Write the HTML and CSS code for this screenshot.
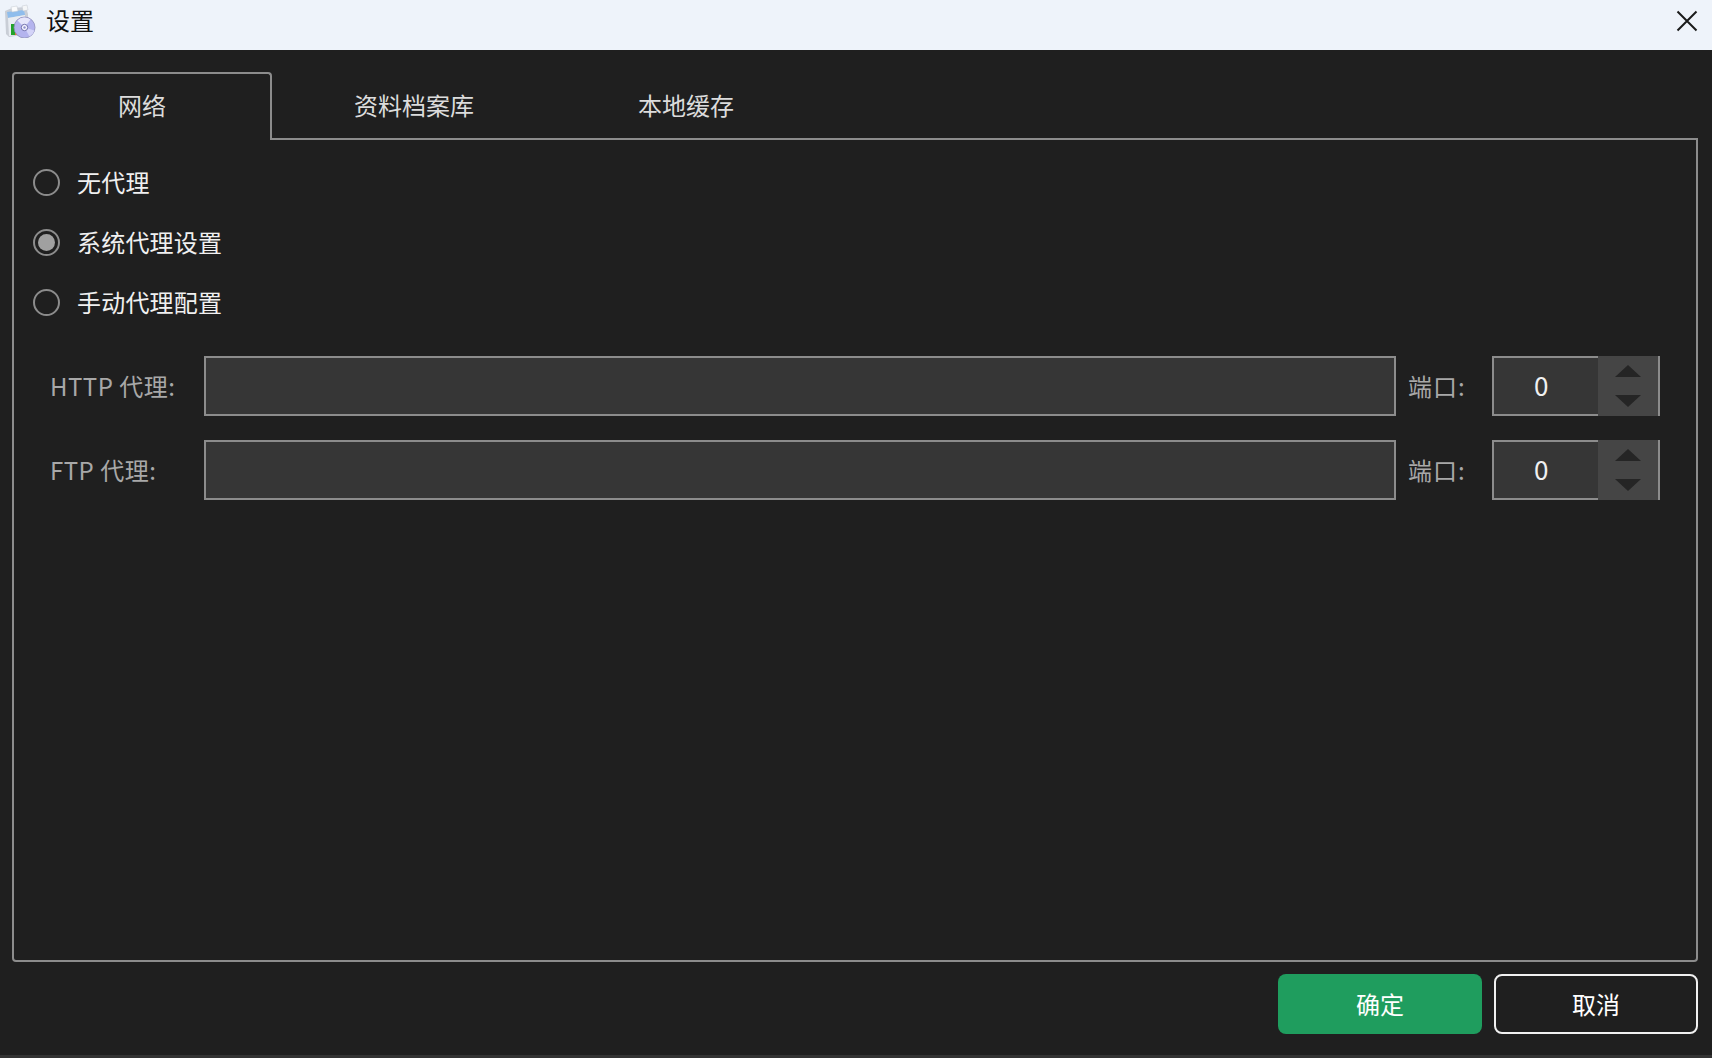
FILE: index.html
```html
<!DOCTYPE html>
<html lang="zh-CN">
<head>
<meta charset="utf-8">
<title>设置</title>
<link rel="stylesheet" href="styles.css">
</head>
<body>
<div class="window">
  <header class="titlebar">
    <svg class="app-icon" width="34" height="34" viewBox="0 0 34 34">
      <path d="M3 7 L10 4 L24 3 L26 10 L26 30 L7 33 L4 30 Z" fill="#c9ced6"/>
      <path d="M5 8 L22 6 L23 11 L6 14 Z" fill="#8fbdec"/>
      <path d="M6 14 L23 11 L23 30 L7 32 Z" fill="#e8ecf2"/>
      <path d="M9 3 L15 2 L16 7 L10 8 Z" fill="#fafbfc" stroke="#c2c8d0" stroke-width="0.500"/>
      <path d="M20 2 L25 1 L26 6 L21 7 Z" fill="#f4f6f8" stroke="#c2c8d0" stroke-width="0.500"/>
      <rect x="9" y="20" width="4" height="11" fill="#22a32a"/>
      <rect x="13" y="21" width="3" height="10" fill="#e8702a"/>
      <circle cx="22.500" cy="23.500" r="10.500" fill="#b4b4ee" stroke="#8c8cb8" stroke-width="0.800"/>
      <path d="M15.500 16.500 A10 10 0 0 1 28.500 15.500 L22.500 23.500 Z" fill="#e6e6fb"/>
      <path d="M22.500 23.500 L32.500 26.500 A10 10 0 0 1 27.500 32.500 Z" fill="#d4d4f8"/>
      <circle cx="22.500" cy="23.500" r="3.200" fill="#f6f6ff" stroke="#7070ac"/>
      <circle cx="22.500" cy="23.500" r="1.200" fill="#9090cc"/>
    </svg>
    <span class="title-text">设置</span>
    <svg class="close-icon" width="22" height="22" viewBox="0 0 22 22">
      <path d="M1.500 1.500 L20.500 20.500 M20.500 1.500 L1.500 20.500" stroke="#1a1a1a" stroke-width="2" fill="none"/>
    </svg>
  </header>
  <main class="content">
    <nav class="tabs">
      <div class="tab tab-active">网络</div>
      <div class="tab">资料档案库</div>
      <div class="tab">本地缓存</div>
    </nav>
    <section class="pane">
      <div class="radio-row">
        <span class="radio"></span><span class="radio-label">无代理</span>
      </div>
      <div class="radio-row">
        <span class="radio radio-on"></span><span class="radio-label">系统代理设置</span>
      </div>
      <div class="radio-row">
        <span class="radio"></span><span class="radio-label">手动代理配置</span>
      </div>
      <div class="proxy-form">
        <div class="proxy-row">
          <label class="field-label">HTTP 代理:</label>
          <div class="text-input"></div>
          <label class="port-label">端口:</label>
          <div class="spin">
            <div class="spin-value">0</div>
            <div class="spin-buttons">
              <svg width="28" height="14" viewBox="0 0 28 14"><path d="M14 1 L27 13 L1 13 Z" fill="#252525"/></svg>
              <svg width="28" height="14" viewBox="0 0 28 14"><path d="M1 1 L27 1 L14 13 Z" fill="#252525"/></svg>
            </div>
          </div>
        </div>
        <div class="proxy-row">
          <label class="field-label">FTP 代理:</label>
          <div class="text-input"></div>
          <label class="port-label">端口:</label>
          <div class="spin">
            <div class="spin-value">0</div>
            <div class="spin-buttons">
              <svg width="28" height="14" viewBox="0 0 28 14"><path d="M14 1 L27 13 L1 13 Z" fill="#252525"/></svg>
              <svg width="28" height="14" viewBox="0 0 28 14"><path d="M1 1 L27 1 L14 13 Z" fill="#252525"/></svg>
            </div>
          </div>
        </div>
      </div>
    </section>
    <footer class="actions">
      <button class="btn btn-ok">确定</button>
      <button class="btn btn-cancel">取消</button>
    </footer>
  </main>
</div>
</body>
</html>
```
FILE: styles.css
```css
* { box-sizing: border-box; }
html, body { margin: 0; padding: 0; height: 100%; overflow: hidden; }
body {
  background: #1f1f1f;
  font-family: "Noto Sans CJK SC", "Noto Sans", sans-serif;
  font-size: 24px;
  color: #e6e6e6;
}
.window {
  height: 1058px;
  display: flex;
  flex-direction: column;
  background: #1f1f1f;
  border-bottom: 3px solid #333333;
}
.titlebar {
  height: 50px;
  flex: none;
  background: #eef3fa;
  color: #111;
  display: flex;
  align-items: center;
  padding: 0 14px 9px 2px;
}
.app-icon { flex: none; margin-right: 10px; }
.title-text { flex: 1; line-height: 36px; padding-bottom: 2px; }
.close-icon { flex: none; }
.content { flex: 1; display: flex; flex-direction: column; padding: 22px 14px 0 12px; }
.tabs { display: flex; height: 67px; flex: none; position: relative; z-index: 1; }
.tab {
  width: 272px;
  height: 67px;
  display: flex;
  align-items: center;
  justify-content: center;
  color: #dcdcdc;
  padding-bottom: 3px;
}
.tab-active {
  width: 260px;
  margin-right: 6px;
  background: #1f1f1f;
  border: 2px solid #8c8c8c;
  border-bottom: 0;
  border-radius: 4px 4px 0 0;
  height: 68px;
  padding-bottom: 5px;
}
.pane {
  height: 824px;
  flex: none;
  border: 2px solid #8c8c8c;
  border-radius: 0 0 4px 4px;
  margin-top: -1px;
  padding: 12px 0 0 19px;
}
.radio-row { height: 60px; display: flex; align-items: center; color: #f0f0f0; }
.radio {
  width: 27px;
  height: 27px;
  border: 2px solid #8c8c8c;
  border-radius: 50%;
  flex: none;
  margin-right: 17px;
  display: flex;
  align-items: center;
  justify-content: center;
}
.radio-label { padding-bottom: 2px; letter-spacing: 0.2px; }
.radio-on::before { content: ""; width: 17px; height: 17px; border-radius: 50%; background: #a0a0a0; }
.proxy-form { display: flex; flex-direction: column; gap: 24px; margin-top: 24px; padding-left: 15px; }
.proxy-row { display: flex; align-items: center; height: 60px; }
.field-label { width: 156px; flex: none; color: #a8a8a8; padding: 0 0 2px 2px; letter-spacing: 0.5px; }
.text-input { width: 1192px; height: 60px; flex: none; background: #363636; border: 2px solid #8c8c8c; }
.port-label { width: 96px; flex: none; padding: 0 0 2px 12px; color: #a8a8a8; letter-spacing: 1px; }
.spin { width: 168px; height: 60px; flex: none; display: flex; }
.spin-value {
  width: 106px;
  background: #363636;
  border: 2px solid #8c8c8c;
  border-right: 0;
  color: #f0f0f0;
  font-size: 26px;
  display: flex;
  align-items: center;
  padding: 0 0 3px 40px;
}
.spin-buttons {
  width: 62px;
  background: #454545;
  border-right: 2px solid #8c8c8c;
  display: flex;
  flex-direction: column;
  align-items: center;
  justify-content: space-between;
  padding: 8px 0;
}
.actions { display: flex; justify-content: flex-end; gap: 12px; margin-top: 12px; }
.btn {
  width: 204px;
  height: 60px;
  border-radius: 8px;
  font: inherit;
  color: #fff;
  padding: 0 0 2px;
}
.btn-ok { background: #1f9d5e; border: 0; }
.btn-cancel { background: #1f1f1f; border: 2px solid #f0f0f0; }
```
